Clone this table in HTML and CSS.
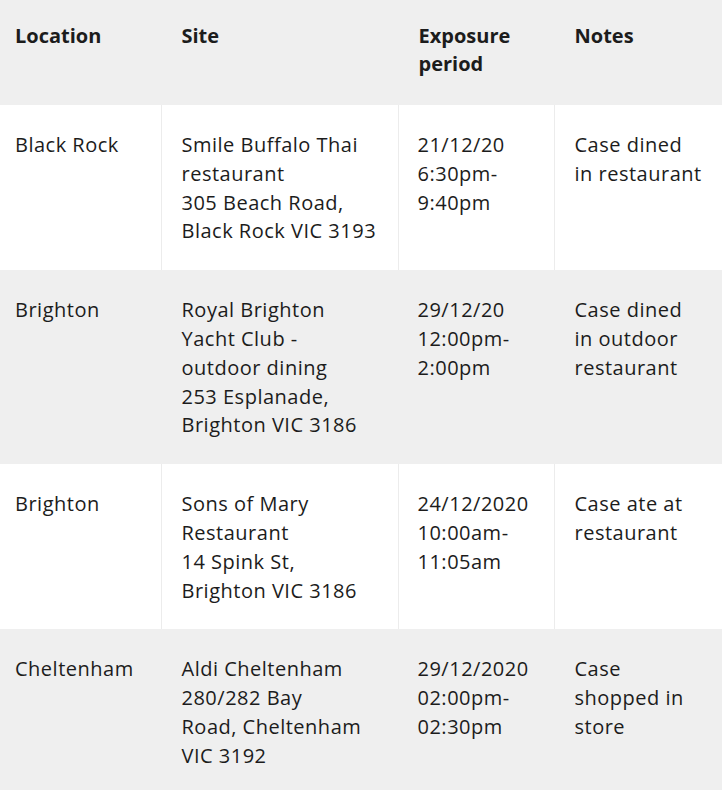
FILE: index.html
```html
<!DOCTYPE html>
<html>
<head>
<meta charset="utf-8">
<link rel="stylesheet" href="styles.css">
</head>
<body>
<table class="exposure">
  <colgroup>
    <col class="c1"><col class="c2"><col class="c3"><col class="c4">
  </colgroup>
  <thead>
    <tr class="head">
      <th>Location</th>
      <th>Site</th>
      <th>Exposure period</th>
      <th>Notes</th>
    </tr>
  </thead>
  <tbody>
    <tr class="odd">
      <td>Black Rock</td>
      <td>Smile Buffalo Thai restaurant<br>305 Beach Road, Black Rock VIC 3193</td>
      <td>21/12/20 6:30pm-9:40pm</td>
      <td>Case dined in restaurant</td>
    </tr>
    <tr class="even">
      <td>Brighton</td>
      <td>Royal Brighton Yacht Club - outdoor dining<br>253 Esplanade, Brighton VIC 3186</td>
      <td>29/12/20 12:00pm-2:00pm</td>
      <td>Case dined in outdoor restaurant</td>
    </tr>
    <tr class="odd">
      <td>Brighton</td>
      <td>Sons of Mary Restaurant<br>14 Spink St, Brighton VIC 3186</td>
      <td>24/12/2020 10:00am-11:05am</td>
      <td>Case ate at restaurant</td>
    </tr>
    <tr class="even">
      <td>Cheltenham</td>
      <td>Aldi Cheltenham<br>280/282 Bay<br>Road, Cheltenham VIC 3192</td>
      <td>29/12/2020 02:00pm-02:30pm</td>
      <td>Case shopped in store</td>
    </tr>
  </tbody>
</table>
</body>
</html>
```

FILE: styles.css
```css
html, body {
  margin: 0;
  padding: 0;
  background: #ffffff;
}
body {
  font-family: "Open Sans", "Noto Sans", sans-serif;
  font-size: 20px;
  letter-spacing: 0.5px;
  color: #1c1c1c;
}
.exposure {
  width: 722px;
  border-collapse: collapse;
  table-layout: fixed;
}
.c1 { width: 161px; }
.c2 { width: 237px; }
.c3 { width: 156px; }
.c4 { width: 168px; }
.exposure th,
.exposure td {
  text-align: left;
  vertical-align: top;
  line-height: 28.8px;
  padding: 26px 20px 24px 20px;
  border-left: 1px solid #ececec;
}
.exposure td:nth-child(3) {
  padding-left: 19px;
}
.exposure th:first-child,
.exposure td:first-child {
  padding-left: 15px;
  border-left: none;
}
.exposure th {
  font-weight: 700;
  letter-spacing: 0;
  padding-top: 22px;
  padding-bottom: 27px;
  line-height: 28px;
}
.head, .even {
  background: #efefef;
}
.head th, .even td {
  border-left-color: #efefef;
}
.odd {
  background: #ffffff;
}
```
